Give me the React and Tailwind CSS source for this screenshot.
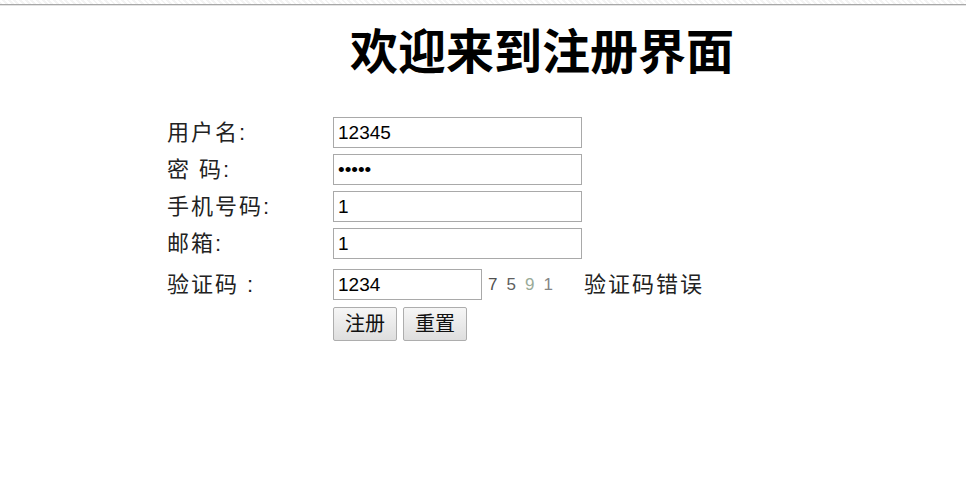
import React from "react";

const font = { fontFamily: '"Liberation Sans", "Noto Sans CJK SC", sans-serif' };

function Field({ label, children, className = "" }) {
  return (
    <div className={`flex items-center ${className}`}>
      <div className="w-[166px] text-[22px] tracking-[2px] text-[#222] leading-none">{label}</div>
      {children}
    </div>
  );
}

function TextBox({ value, type = "text", width = "w-[249px]" }) {
  return (
    <input
      type={type}
      value={value}
      readOnly
      className={`${width} h-[31px] border border-[#a9a9a9] bg-white px-[4px] text-[19px] text-black outline-none`}
      style={font}
    />
  );
}

function Btn({ children }) {
  return (
    <button className="h-[34px] w-[64px] rounded-[2px] border border-[#adadad] bg-gradient-to-b from-[#f6f6f6] to-[#dedede] text-[20px] text-[#111] leading-none">
      {children}
    </button>
  );
}

export default function App() {
  return (
    <div className="min-h-[481px] w-[966px] bg-white" style={font}>
      <div className="h-[4px] bg-[repeating-linear-gradient(45deg,#f4f4f4_0px,#f4f4f4_2px,#ffffff_2px,#ffffff_4px)]" />
      <div className="h-[1px] bg-[#a8a8a8]" />
      <div className="h-[1px] bg-[#e4e4e4]" />
      <h1 className="pl-[350px] pt-[19px] text-[48px] font-semibold leading-[56px] text-black">欢迎来到注册界面</h1>
      <div className="pl-[167px] pt-[36px] flex flex-col">
        <Field label="用户名:">
          <TextBox value="12345" />
        </Field>
        <Field label="密 码:" className="mt-[6px]">
          <TextBox value="12345" type="password" />
        </Field>
        <Field label="手机号码:" className="mt-[6px]">
          <TextBox value="1" />
        </Field>
        <Field label="邮箱:" className="mt-[6px]">
          <TextBox value="1" />
        </Field>
        <Field label="验证码 :" className="mt-[10px]">
          <TextBox value="1234" width="w-[149px]" />
          <div className="ml-[6px] flex gap-[9px] text-[17px] leading-none">
            <span className="text-[#505050]">7</span>
            <span className="text-[#606060]">5</span>
            <span className="text-[#9aab98]">9</span>
            <span className="text-[#858585]">1</span>
          </div>
          <div className="ml-[31px] text-[22px] tracking-[2px] text-[#222] leading-none">验证码错误</div>
        </Field>
        <div className="mt-[7px] ml-[166px] flex gap-[6px]">
          <Btn>注册</Btn>
          <Btn>重置</Btn>
        </div>
      </div>
    </div>
  );
}
